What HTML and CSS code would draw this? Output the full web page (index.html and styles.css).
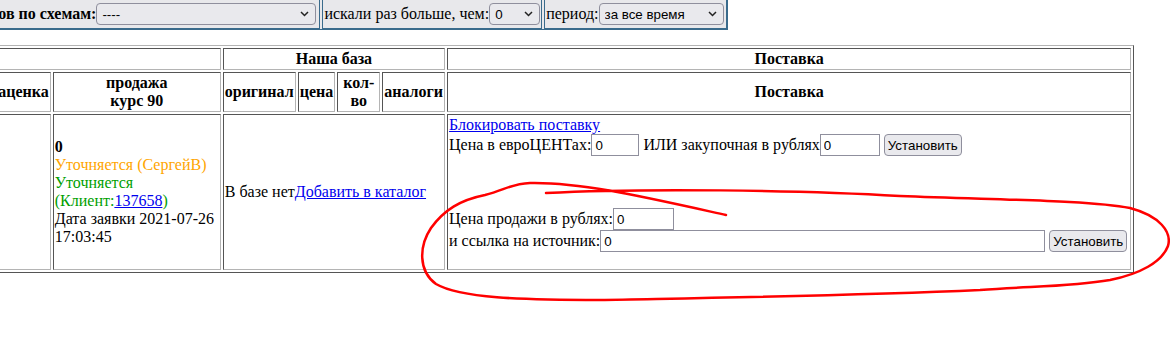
FILE: index.html
```html
<!DOCTYPE html>
<html lang="ru">
    <head>
        <meta charset="UTF-8">
        <title>Заявка</title>
        <link rel="stylesheet" href="styles.css">
    </head>

    <body>
        <div class="filters">
            <div class="filter filter-first">
                <b>Поиск артикулов по схемам:</b><select class="pick pick-scheme"><option>----</option></select>
            </div>
            <div class="filter">
                <span>искали раз больше, чем:</span><select class="pick pick-times"><option>0</option></select>
            </div>
            <div class="filter filter-last">
                <span>период:</span><select class="pick pick-period"><option>за все время</option></select>
            </div>
        </div>

        <table class="orders">
            <tr>
                <th colspan="2"></th>
                <th colspan="4">Наша база</th>
                <th>Поставка</th>
            </tr>
            <tr>
                <th>наценка</th>
                <th class="col-sale">продажа<br>курс 90</th>
                <th>оригинал</th>
                <th>цена</th>
                <th class="col-qty">кол-во</th>
                <th>аналоги</th>
                <th class="col-supply">Поставка</th>
            </tr>
            <tr>
                <td></td>
                <td>
                    <b>0</b><br>
                    <span class="state-manager">Уточняется (СергейВ)</span><br>
                    <span class="state-client">Уточняется (Клиент:<a href="#">137658</a>)</span><br>
                    Дата заявки 2021-07-26 17:03:45
                </td>
                <td colspan="4">В базе нет<a href="#">Добавить в каталог</a></td>
                <td class="supply">
                    <a href="#" class="supply-link">Блокировать поставку</a>
                    <div class="supply-row">Цена в евроЦЕНТах:<input type="text" class="field field-eur" value="0"> ИЛИ закупочная в рублях<input type="text" class="field field-rub" value="0"> <button type="button" class="btn">Установить</button></div>
                    <div class="supply-row supply-row-sale">Цена продажи в рублях:<input type="text" class="field field-sale" value="0"></div>
                    <div class="supply-row supply-row-last">и ссылка на источник:<input type="text" class="field field-source" value="0"> <button type="button" class="btn">Установить</button></div>
                </td>
            </tr>
        </table>

        <svg class="scribble" width="1170" height="360" viewBox="0 0 1170 360">
            <path d="M546 193 C 640 188 800 190 900 196 C 1000 200 1090 200 1130 208 C 1160 216 1172 232 1168 246 C 1162 262 1140 274 1110 280 C 1070 287 1030 286 980 290 C 850 296 700 298 600 300 C 520 300 460 298 436 284 C 418 271 419 246 431 228 C 444 210 460 200 485 195 C 505 190 510 184 530 183 C 580 182 640 196 726 215" />
        </svg>
    </body>
</html>
```

FILE: styles.css
```css
body {
    margin: 0;
    font-family: "Liberation Serif", "Times New Roman", serif;
    font-size: 16px;
    color: #000;
    background: #fff;
}

a {
    color: #0000ee;
}

/* filter bar */
.filters {
    display: inline-flex;
    gap: 2px;
    margin: -2px 0 0 -114px;
    border: 1px solid #3a6b8c;
    background-color: #e8e8eb;
}

.filter {
    display: flex;
    align-items: center;
    padding: 3px 1px;
    border: 1px solid #3a6b8c;
    white-space: nowrap;
}

.filter-first {
    padding-right: 3px;
}

.filter-last {
    padding-right: 2px;
}

.pick {
    appearance: none;
    -webkit-appearance: none;
    box-sizing: border-box;
    height: 22px;
    margin: 0;
    padding: 0 20px 0 5px;
    border: 1px solid #8f8f9d;
    border-radius: 4px;
    background-color: #e9e9ed;
    background-image: url("data:image/svg+xml,%3Csvg xmlns='http://www.w3.org/2000/svg' width='9' height='6'%3E%3Cpath d='M1 1l3.5 3.5L8 1' fill='none' stroke='%23222' stroke-width='1.5'/%3E%3C/svg%3E");
    background-repeat: no-repeat;
    background-position: right 6px center;
    font-family: "Liberation Sans", Arial, sans-serif;
    font-size: 13.33px;
    color: #000;
}

.pick-scheme {
    width: 220px;
}

.pick-times {
    width: 51px;
}

.pick-period {
    width: 125px;
}

/* main table */
.orders {
    margin: 15px 0 0 -16px;
    border: 1px solid;
    border-color: #b4b4b4 #555 #555 #b4b4b4;
    border-spacing: 2px;
}

.orders th,
.orders td {
    padding: 1px;
    border: 1px solid;
    border-color: #555 #b4b4b4 #b4b4b4 #555;
}

.col-sale {
    width: 164px;
}

.col-qty {
    width: 39px;
}

.col-supply {
    width: 680px;
}

.state-manager {
    color: #ffa500;
}

.state-client {
    color: #00a000;
}

.supply {
    vertical-align: top;
    white-space: nowrap;
}

.supply-link {
    display: block;
    height: 18px;
    line-height: 18px;
}

.supply-row {
    height: 22px;
    line-height: 22px;
}

.supply-row-sale {
    margin-top: 52px;
}

.supply-row-last {
    margin-bottom: 16px;
}

.field,
.btn {
    box-sizing: border-box;
    height: 22px;
    margin: 0;
    vertical-align: top;
    font-family: "Liberation Sans", Arial, sans-serif;
    font-size: 13.33px;
    color: #000;
}

.field {
    padding: 0 3px;
    border: 1px solid #8f8f9d;
    background: #fff;
}

.field-eur {
    width: 48px;
}

.field-rub {
    width: 60px;
}

.field-sale {
    width: 61px;
}

.field-source {
    width: 445px;
}

.btn {
    width: 78px;
    padding: 0;
    border: 1px solid #8f8f9d;
    border-radius: 4px;
    background-color: #e9e9ed;
}

/* red pen mark over the screenshot */
.scribble {
    position: absolute;
    top: 0;
    left: 0;
    pointer-events: none;
    fill: none;
    stroke: #f00;
    stroke-width: 2.5;
    stroke-linecap: round;
    stroke-linejoin: round;
}
```
